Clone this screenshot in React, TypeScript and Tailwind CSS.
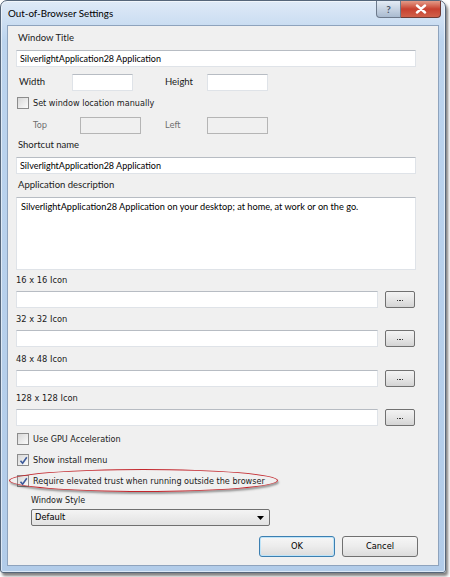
import React from 'react';

const ui = "font-['Lato','Open_Sans',sans-serif]";
const tahoma = "font-['DejaVu_Sans','Liberation_Sans',sans-serif]";

const TextBox: React.FC<{ className?: string; disabled?: boolean; children?: React.ReactNode }> = ({
  className = '',
  disabled,
  children,
}) => (
  <div
    className={`h-[17px] shrink-0 flex items-center px-[3px] text-[9px] text-black border ${
      disabled
        ? 'bg-[#f0f0f0] border-[#b5b5b5]'
        : 'bg-white border-[#dfe3e8] border-t-[#b7bcc3]'
    } ${className}`}
  >
    {children}
  </div>
);

const Label: React.FC<{ className?: string; children: React.ReactNode }> = ({ className = '', children }) => (
  <div className={`h-[16px] flex items-center text-[#1a1a1a] ${className}`}>{children}</div>
);

const CheckBox: React.FC<{ checked?: boolean }> = ({ checked }) => (
  <div className="w-[12px] h-[12px] shrink-0 border border-[#8c8c8c] bg-gradient-to-br from-[#d8d8d8] to-[#fbfbfb] flex items-center justify-center">
    {checked && (
      <svg width="9" height="9" viewBox="0 0 9 9">
        <path d="M1.5 4.8 L3.6 7.3 L7.8 1.2" fill="none" stroke="#3d5a9a" strokeWidth="1.6" />
      </svg>
    )}
  </div>
);

const CheckRow: React.FC<{ checked?: boolean; className?: string; children: React.ReactNode }> = ({
  checked,
  className = '',
  children,
}) => (
  <div className={`relative h-[14px] flex items-center gap-[4px] pl-[1px] ${className}`}>
    <CheckBox checked={checked} />
    <span className={`${tahoma} text-[8.1px] text-[#1a1a1a]`}>{children}</span>
  </div>
);

const Browse: React.FC = () => (
  <div className="w-[30px] h-[17px] rounded-[2px] border border-[#707070] bg-gradient-to-b from-[#f3f3f3] via-[#e6e6e6] to-[#d4d4d4] flex items-center justify-center gap-[1px] pt-[2px]">
    <div className="w-[1.5px] h-[1.5px] bg-[#3a3a3a]" />
    <div className="w-[1.5px] h-[1.5px] bg-[#3a3a3a]" />
    <div className="w-[1.5px] h-[1.5px] bg-[#3a3a3a]" />
  </div>
);

const IconRow: React.FC<{ label: string; className?: string }> = ({ label, className = '' }) => (
  <div className={className}>
    <Label className={`${tahoma} text-[8.3px] pt-[2px]`}>{label}</Label>
    <div className="mt-[4px] h-[17px] flex items-center gap-[7px]">
      <TextBox className="w-[362px]" />
      <Browse />
    </div>
  </div>
);

export default function App() {
  return (
    <div className={`w-[450px] h-[577px] bg-white overflow-hidden ${ui}`}>
      <div className="w-[446px] h-[573px] rounded-t-[7px] rounded-b-[3px] border border-[#56667a] bg-[linear-gradient(to_bottom,#dfeaf7,#bcd4ee_40px,#b2cce9)] shadow-[inset_0_0_0_1px_rgba(255,255,255,0.55),2px_3px_3px_rgba(0,0,0,0.5)] flex flex-col">
        {/* title bar */}
        <div className="h-[24px] flex items-start">
          <div className="pl-[7px] pt-[5px] text-[9.8px] text-black">Out-of-Browser Settings</div>
          <div className="ml-auto mr-[4px] flex">
            <div className="w-[25px] h-[17px] rounded-bl-[4px] border border-t-0 border-[#6d7a8c] bg-gradient-to-b from-[#e4ecf5] to-[#aabbd0] flex items-center justify-center text-[10px] leading-none text-[#4a5566] font-bold">
              ?
            </div>
            <div className="w-[40px] h-[17px] rounded-br-[4px] border border-l-0 border-t-0 border-[#6d3a34] bg-gradient-to-b from-[#e39a88] via-[#c7402f] to-[#d0604a] flex items-center justify-center">
              <svg width="12" height="10" viewBox="0 0 12 10">
                <path d="M2 1.5 L10 8.5 M10 1.5 L2 8.5" stroke="#fff" strokeWidth="2.4" strokeLinecap="round" />
              </svg>
            </div>
          </div>
        </div>

        {/* client area */}
        <div className="mx-[6px] mb-[6px] flex-1 border border-[#8ea3bd] bg-[#f0f0f0] pl-[8px] flex flex-col text-[9.5px]">
          <Label className="mt-[4px] pl-[2px]">Window Title</Label>
          <TextBox className="mt-[4px] w-[400px]">SilverlightApplication28 Application</TextBox>

          <div className="mt-[7px] h-[17px] flex items-center text-[#1a1a1a]">
            <span className="w-[56px] pl-[3px]">Width</span>
            <TextBox className="w-[61px]" />
            <span className="ml-[32px] w-[42px]">Height</span>
            <TextBox className="w-[61px]" />
          </div>

          <CheckRow className="mt-[5px]">Set window location manually</CheckRow>

          <div className={`mt-[7px] h-[17px] flex items-center text-[8.3px] text-[#6d6d6d] ${tahoma}`}>
            <span className="w-[64px] pl-[17px]">Top</span>
            <TextBox disabled className="w-[61px]" />
            <span className="ml-[24px] w-[42px]">Left</span>
            <TextBox disabled className="w-[61px]" />
          </div>

          <Label className="mt-[3px] pl-[2px]">Shortcut name</Label>
          <TextBox className="mt-[4px] w-[400px]">SilverlightApplication28 Application</TextBox>

          <Label className="mt-[3px] pl-[2px]">Application description</Label>
          <div className="mt-[4px] w-[400px] h-[73px] bg-white border border-[#dfe3e8] border-t-[#b7bcc3] px-[4px] pt-[2px] text-[9.2px] text-black">
            SilverlightApplication28 Application on your desktop; at home, at work or on the go.
          </div>

          <IconRow label="16 x 16 Icon" className="mt-[1px]" />
          <IconRow label="32 x 32 Icon" className="mt-[2px]" />
          <IconRow label="48 x 48 Icon" className="mt-[3px]" />
          <IconRow label="128 x 128 Icon" className="mt-[2px]" />

          <CheckRow className="mt-[6px]">Use GPU Acceleration</CheckRow>
          <CheckRow checked className="mt-[7px]">Show install menu</CheckRow>
          <CheckRow checked className="mt-[7px]">
            Require elevated trust when running outside the browser
            <span className="absolute left-[-7px] top-[-5px] w-[269px] h-[23px] rounded-[50%] border-[1.5px] border-[#c3272d] shadow-[1px_2px_2px_rgba(0,0,0,0.35)] pointer-events-none" />
          </CheckRow>

          <div className="pl-[15px]">
            <Label className={`mt-[4px] pt-[2px] ${tahoma} text-[8px]`}>Window Style</Label>
            <div className={`mt-[1px] w-[239px] h-[17px] border border-[#707070] rounded-[2px] bg-gradient-to-b from-[#f4f4f4] to-[#e2e2e2] flex items-center pl-[3px] pr-[5px] text-[8.3px] text-black ${tahoma}`}>
              <span>Default</span>
              <svg className="ml-auto" width="7" height="4" viewBox="0 0 7 4">
                <path d="M0 0 L7 0 L3.5 4 Z" fill="#000" />
              </svg>
            </div>
          </div>

          <div className={`mt-[10px] flex gap-[7px] pl-[243px] ${tahoma} text-[8.3px] text-black`}>
            <div className="w-[76px] h-[21px] rounded-[3px] border border-[#3c7fb1] bg-gradient-to-b from-[#f6f6f6] via-[#ececec] to-[#dcdcdc] shadow-[inset_0_0_0_1px_#bfe4f8] flex items-center justify-center">
              OK
            </div>
            <div className="w-[76px] h-[21px] rounded-[3px] border border-[#707070] bg-gradient-to-b from-[#f6f6f6] via-[#ececec] to-[#dcdcdc] flex items-center justify-center">
              Cancel
            </div>
          </div>
        </div>
      </div>
    </div>
  );
}
